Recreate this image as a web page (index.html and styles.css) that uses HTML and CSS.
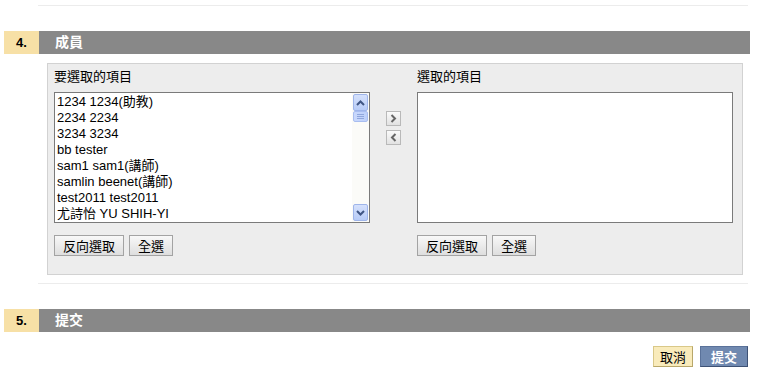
FILE: index.html
```html
<!DOCTYPE html>
<html lang="zh-Hant">
<head>
    <meta charset="utf-8">
    <title>成員</title>
    <link rel="stylesheet" href="styles.css">
</head>
<body>
    <div class="rule"></div>

    <div class="section-head">
        <div class="section-num">4.</div>
        <div class="section-title">成員</div>
    </div>

    <div class="panel">
        <div class="picker">
            <div class="picker-col">
                <div class="picker-label">要選取的項目</div>
                <div class="listbox">
                    <ul class="list-items">
                        <li>1234 1234(助教)</li>
                        <li>2234 2234</li>
                        <li>3234 3234</li>
                        <li>bb tester</li>
                        <li>sam1 sam1(講師)</li>
                        <li>samlin beenet(講師)</li>
                        <li>test2011 test2011</li>
                        <li>尤詩怡 YU SHIH-YI</li>
                    </ul>
                    <div class="scrollbar">
                        <div class="scroll-btn">
                            <svg width="9" height="6" viewBox="0 0 9 6"><path d="M1 5 L4.5 1.5 L8 5" fill="none" stroke="#3f5584" stroke-width="2"/></svg>
                        </div>
                        <div class="scroll-thumb">
                            <span></span><span></span><span></span>
                        </div>
                        <div class="scroll-track"></div>
                        <div class="scroll-btn">
                            <svg width="9" height="6" viewBox="0 0 9 6"><path d="M1 1 L4.5 4.5 L8 1" fill="none" stroke="#3f5584" stroke-width="2"/></svg>
                        </div>
                    </div>
                </div>
                <div class="btn-row">
                    <button class="btn">反向選取</button>
                    <button class="btn">全選</button>
                </div>
            </div>

            <div class="move-col">
                <button class="move-btn">
                    <svg width="7" height="9" viewBox="0 0 7 9"><path d="M1.5 1 L5 4.5 L1.5 8" fill="none" stroke="#666" stroke-width="2"/></svg>
                </button>
                <button class="move-btn">
                    <svg width="7" height="9" viewBox="0 0 7 9"><path d="M5.5 1 L2 4.5 L5.5 8" fill="none" stroke="#666" stroke-width="2"/></svg>
                </button>
            </div>

            <div class="picker-col">
                <div class="picker-label">選取的項目</div>
                <div class="listbox"></div>
                <div class="btn-row">
                    <button class="btn">反向選取</button>
                    <button class="btn">全選</button>
                </div>
            </div>
        </div>
    </div>

    <div class="rule rule-after"></div>

    <div class="section-head">
        <div class="section-num">5.</div>
        <div class="section-title">提交</div>
    </div>

    <div class="actions">
        <button class="action cancel">取消</button>
        <button class="action submit">提交</button>
    </div>
</body>
</html>
```

FILE: styles.css
```css
body {
    margin: 0;
    padding: 0 9px 0 4px;
    font-family: "Liberation Sans", Arial, "Noto Sans CJK TC", sans-serif;
    font-size: 13px;
    color: #000;
    background-color: #fff;
}

.rule {
    height: 1px;
    margin: 5px 2px 0 34px;
    background-color: #ececec;
}

.rule-after {
    margin-top: 8px;
}

.section-head {
    display: flex;
    height: 23px;
    margin-top: 25px;
    line-height: 23px;
    font-weight: bold;
    font-size: 13px;
}

.section-num {
    width: 23px;
    padding-left: 12px;
    background-color: #f7e0a6;
    color: #000;
}

.section-title {
    flex: 1;
    padding-left: 16px;
    background-color: #888888;
    color: #fff;
    font-size: 14px;
}

.panel {
    margin: 9px 7px 0 43px;
    padding: 5px 9px 18px 6px;
    background-color: #ededed;
    border: 1px solid #d2d2d2;
}

.picker {
    display: flex;
    gap: 16px;
}

.picker-col {
    width: 316px;
}

.picker-label {
    line-height: 16px;
    font-size: 13px;
    margin-bottom: 7px;
}

.listbox {
    display: flex;
    height: 129px;
    border: 1px solid #7a7a7a;
    background-color: #fff;
}

.list-items {
    flex: 1;
    margin: 0;
    padding: 1px 0 0 2px;
    list-style: none;
    font-size: 13px;
    line-height: 16px;
}

.scrollbar {
    display: flex;
    flex-direction: column;
    width: 17px;
    background-color: #fbfbf8;
}

.scroll-btn {
    height: 15px;
    margin: 1px 1px 0 1px;
    display: flex;
    align-items: center;
    justify-content: center;
    border: 1px solid #9fb5ea;
    border-radius: 2px;
    background: linear-gradient(#d5e1fc, #b7cbf7);
}

.scroll-btn:last-child {
    margin: 0 1px 1px 1px;
}

.scroll-thumb {
    height: 9px;
    margin: 0 1px;
    display: flex;
    flex-direction: column;
    align-items: center;
    justify-content: center;
    gap: 1px;
    border: 1px solid #a8bdf0;
    border-radius: 2px;
    background: linear-gradient(90deg, #c9d8fc, #bdd0fa);
}

.scroll-thumb span {
    width: 7px;
    height: 1px;
    background-color: #8fa6dc;
}

.scroll-track {
    flex: 1;
}

.btn-row {
    display: flex;
    gap: 5px;
    margin-top: 12px;
}

.btn {
    height: 21px;
    padding: 0 8px;
    font-family: "Noto Sans CJK TC", sans-serif;
    font-size: 13px;
    line-height: 17px;
    color: #000;
    border: 1px solid #a3a3a3;
    border-radius: 0;
    background: linear-gradient(#f8f8f8, #dedede);
}

.move-col {
    display: flex;
    flex-direction: column;
    gap: 4px;
    padding-top: 42px;
}

.move-btn {
    width: 15px;
    height: 15px;
    padding: 0;
    display: flex;
    align-items: center;
    justify-content: center;
    border: 1px solid #b9b9b9;
    background: linear-gradient(#fafafa, #e2e2e2);
}

.actions {
    display: flex;
    justify-content: flex-end;
    gap: 7px;
    margin: 14px 2px 0 0;
}

.action {
    height: 21px;
    padding: 0 5px;
    font-family: "Noto Sans CJK TC", sans-serif;
    font-size: 13px;
    line-height: 17px;
    border-radius: 0;
}

.cancel {
    padding: 0 6px;
    color: #000;
    border: 1px solid #d9c888;
    border-right-color: #b8a76a;
    border-bottom-color: #b8a76a;
    background-color: #f9ebbb;
}

.submit {
    padding: 0 10px;
    color: #fff;
    font-weight: bold;
    border: 1px solid #5a729a;
    border-right-color: #3e5275;
    border-bottom-color: #3e5275;
    background-color: #7089b0;
}
```
